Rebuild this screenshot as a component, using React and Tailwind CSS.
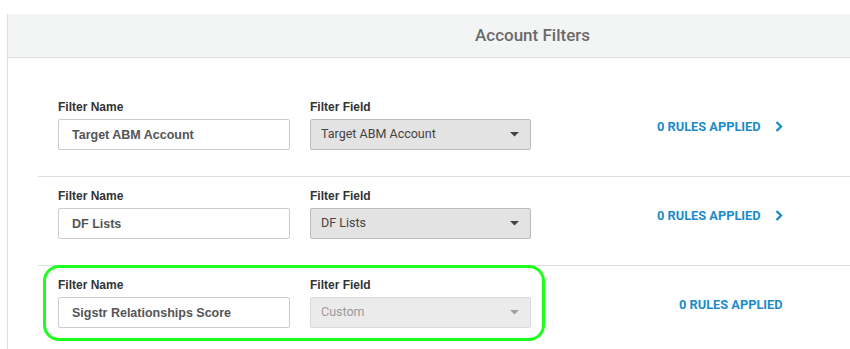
import React from 'react'

const rows = [
    { name: 'Target ABM Account', field: 'Target ABM Account', disabled: false, chevron: true },
    { name: 'DF Lists', field: 'DF Lists', disabled: false, chevron: true },
    { name: 'Sigstr Relationships Score', field: 'Custom', disabled: true, chevron: false },
]

function FilterRow({ row, first, highlight }) {
    return (
        <div className={`relative ml-[30px] flex items-center border-b border-[#dddddd] pl-[20px] pb-[26px] ${first ? 'pt-[42px]' : 'pt-[12px]'}`}>
            {highlight && (
                <div className="pointer-events-none absolute left-[5px] top-[-1px] h-[76px] w-[502px] rounded-[16px] border-[3px] border-[#1cff1c]"></div>
            )}
            <div className="flex w-[232px] flex-col">
                <label className="mb-[5px] h-[14px] text-[12px] font-bold leading-[14px] text-[#333333]" style={{ fontFamily: '"Liberation Sans", Arial, sans-serif' }}>
                    Filter Name
                </label>
                <input
                    type="text"
                    readOnly
                    value={row.name}
                    className="h-[31px] w-[232px] rounded-[2px] border border-[#cccccc] bg-white px-[13px] text-[12.5px] font-bold text-[#555555] outline-none"
                    style={{ fontFamily: '"Liberation Sans", Arial, sans-serif' }}
                />
            </div>
            <div className="ml-[20px] flex w-[221px] flex-col">
                <label className="mb-[5px] h-[14px] text-[12px] font-bold leading-[14px] text-[#333333]" style={{ fontFamily: '"Liberation Sans", Arial, sans-serif' }}>
                    Filter Field
                </label>
                <div
                    className={`flex h-[31px] items-center justify-between rounded-[2px] border px-[10px] text-[12.5px] ${row.disabled ? 'border-[#d9d9d9] bg-[#ebebeb] text-[#9a9a9a]' : 'border-[#bbbbbb] bg-[#e3e3e3] text-[#444444]'}`}
                    style={{ fontFamily: 'Roboto, sans-serif' }}
                >
                    <span>{row.field}</span>
                    <svg width="9" height="5" viewBox="0 0 9 5" className="mr-[1px]">
                        <path d="M0 0 H9 L4.5 4.5 Z" fill={row.disabled ? '#a0a0a0' : '#444444'} />
                    </svg>
                </div>
            </div>
            <div
                className={`mt-[3px] flex items-center text-[12.8px] font-bold text-[#1b8cc9] ${row.chevron ? 'ml-[126px]' : 'ml-[148px]'}`}
                style={{ fontFamily: 'Roboto, sans-serif' }}
            >
                <span>0 RULES APPLIED</span>
                {row.chevron && (
                    <svg width="8" height="11" viewBox="0 0 8 11" className="ml-[14px]">
                        <polyline points="1.5,1 6,5.5 1.5,10" fill="none" stroke="#1b8cc9" strokeWidth="2.4" />
                    </svg>
                )}
            </div>
        </div>
    )
}

export default function App() {
    return (
        <main className="h-[349px] w-[850px] overflow-hidden bg-white pt-[14px]">
            <div className="ml-[7px] w-[1050px] border-l border-[#dddddd]">
                <div className="flex h-[44px] items-center justify-center border-b border-[#dddddd] bg-[#f3f4f4]">
                    <h2 className="text-[17px] font-medium text-[#6b6b6b]" style={{ fontFamily: 'Roboto, sans-serif' }}>
                        Account Filters
                    </h2>
                </div>
                <div>
                    {rows.map((row, i) => (
                        <FilterRow key={row.name} row={row} first={i === 0} highlight={i === 2} />
                    ))}
                </div>
            </div>
        </main>
    )
}
